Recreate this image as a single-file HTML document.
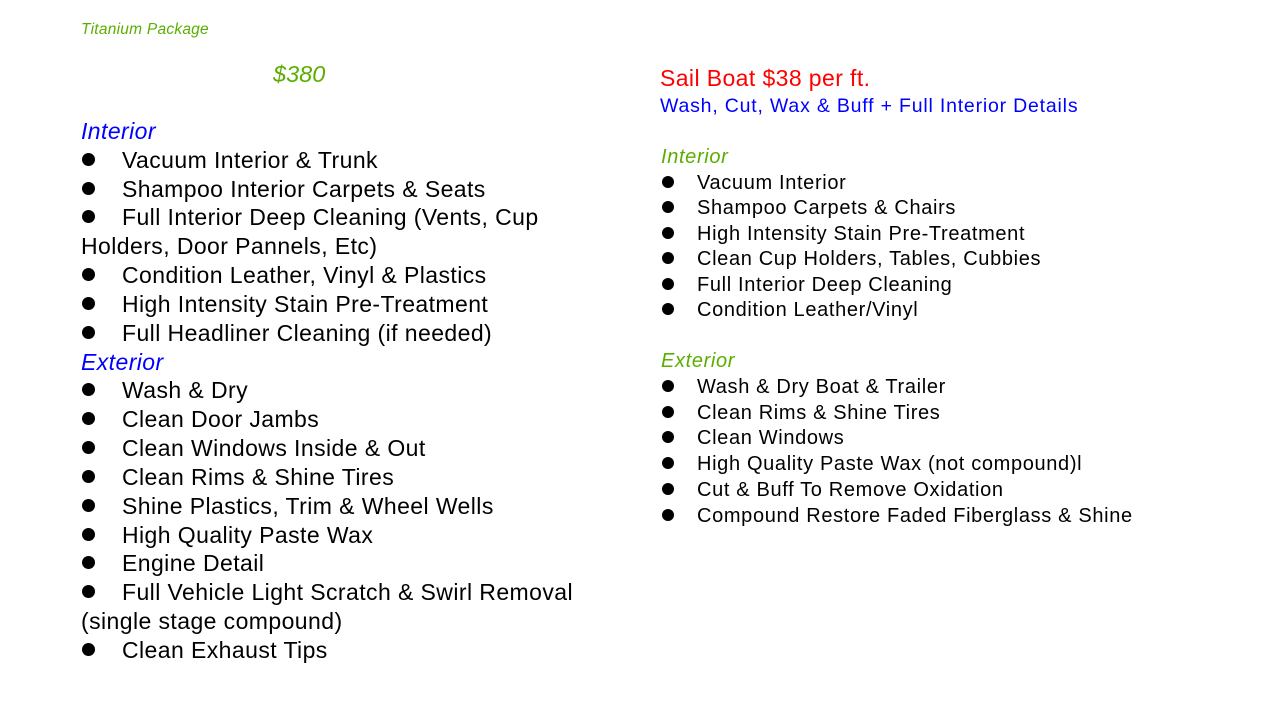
<!DOCTYPE html>
<html><head><style>
body{margin:0;width:1280px;height:720px;background:#fff;font-family:"Liberation Sans",Arial,sans-serif;position:relative;overflow:hidden}
.a{position:absolute;white-space:nowrap}
.g{color:#5aae00;font-style:italic}
.L{position:absolute;left:81px;top:117px;font-size:23px;letter-spacing:0.42px;line-height:28.83px;color:#000}
.L div,.R div{white-space:nowrap;position:relative}
.h{color:#0000ff;font-style:italic}
.b{display:inline-block;width:41px;height:1px;position:relative}
.b::before{content:"";position:absolute;left:1px;top:-14px;width:13px;height:13px;border-radius:50%;background:#000}
.R{position:absolute;left:661px;font-size:20px;letter-spacing:0.65px;line-height:25.5px;color:#000}
.R .b{width:36px}
.R .b::before{left:1px;top:-12px;width:12px;height:12px}
.R .hg{color:#5aae00;font-style:italic}
</style></head><body>
<div class="a g" style="left:81px;top:21px;font-size:15.5px;letter-spacing:0.25px">Titanium Package</div>
<div class="a g" style="left:273px;top:61px;font-size:23.5px">$380</div>
<div class="L">
<div class="h">Interior</div>
<div><span class="b"></span>Vacuum Interior &amp; Trunk</div>
<div><span class="b"></span>Shampoo Interior Carpets &amp; Seats</div>
<div><span class="b"></span>Full Interior Deep Cleaning (Vents, Cup</div>
<div>Holders, Door Pannels, Etc)</div>
<div><span class="b"></span>Condition Leather, Vinyl &amp; Plastics</div>
<div><span class="b"></span>High Intensity Stain Pre-Treatment</div>
<div><span class="b"></span>Full Headliner Cleaning (if needed)</div>
<div class="h">Exterior</div>
<div><span class="b"></span>Wash &amp; Dry</div>
<div><span class="b"></span>Clean Door Jambs</div>
<div><span class="b"></span>Clean Windows Inside &amp; Out</div>
<div><span class="b"></span>Clean Rims &amp; Shine Tires</div>
<div><span class="b"></span>Shine Plastics, Trim &amp; Wheel Wells</div>
<div><span class="b"></span>High Quality Paste Wax</div>
<div><span class="b"></span>Engine Detail</div>
<div><span class="b"></span>Full Vehicle Light Scratch &amp; Swirl Removal</div>
<div>(single stage compound)</div>
<div><span class="b"></span>Clean Exhaust Tips</div>
</div>
<div class="a" style="left:660px;top:65px;font-size:23px;letter-spacing:0.4px;color:#ff0000">Sail Boat $38 per ft.</div>
<div class="a" style="left:660px;top:95px;font-size:19.5px;letter-spacing:0.8px;color:#0000ff">Wash, Cut, Wax &amp; Buff + Full Interior Details</div>
<div class="R" style="top:145px">
<div class="hg">Interior</div>
<div><span class="b"></span>Vacuum Interior</div>
<div><span class="b"></span>Shampoo Carpets &amp; Chairs</div>
<div><span class="b"></span>High Intensity Stain Pre-Treatment</div>
<div><span class="b"></span>Clean Cup Holders, Tables, Cubbies</div>
<div><span class="b"></span>Full Interior Deep Cleaning</div>
<div><span class="b"></span>Condition Leather/Vinyl</div>
</div>
<div class="R" style="top:349px;line-height:25.8px">
<div class="hg">Exterior</div>
<div><span class="b"></span>Wash &amp; Dry Boat &amp; Trailer</div>
<div><span class="b"></span>Clean Rims &amp; Shine Tires</div>
<div><span class="b"></span>Clean Windows</div>
<div><span class="b"></span>High Quality Paste Wax (not compound)l</div>
<div><span class="b"></span>Cut &amp; Buff To Remove Oxidation</div>
<div><span class="b"></span>Compound Restore Faded Fiberglass &amp; Shine</div>
</div>
</body></html>
